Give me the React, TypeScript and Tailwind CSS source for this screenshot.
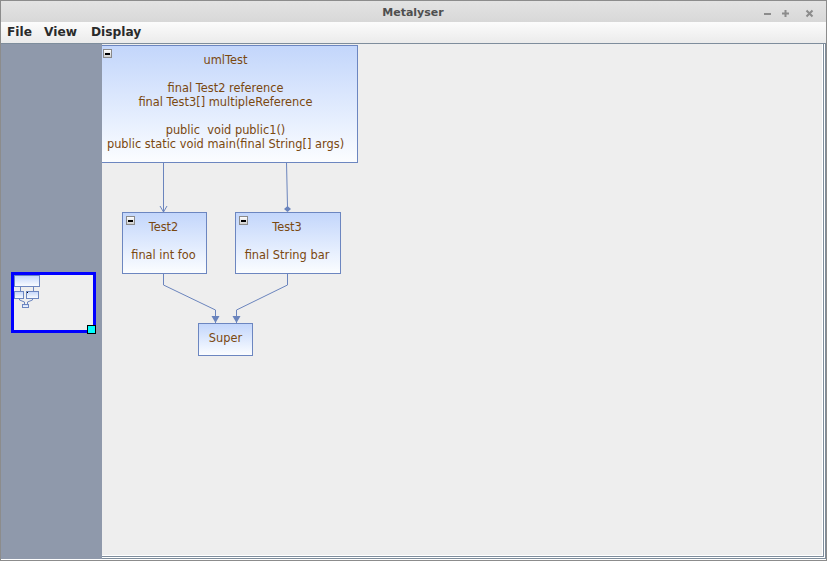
import React from "react";

const FONT = { fontFamily: '"DejaVu Sans", Verdana, sans-serif' };

function MinusIcon({ className }: { className: string }) {
  return (
    <div
      className={`absolute w-[9px] h-[9px] border border-[#8a8a8a] bg-gradient-to-b from-white to-[#cfcfcf] flex items-center justify-center ${className}`}
    >
      <div className="w-[5px] h-[2px] bg-black" />
    </div>
  );
}

function UmlBox({
  className,
  lines,
  icon = true,
}: {
  className: string;
  lines: string[];
  icon?: boolean;
}) {
  return (
    <div
      className={`absolute border border-[#6c86c0] bg-gradient-to-b from-[#c3d6fb] to-[#fbfdff] pt-[7px] flex flex-col items-center text-[11.4px] leading-[14px] text-[#7a4810] ${className}`}
      style={FONT}
    >
      {icon && <MinusIcon className="left-[3px] top-[3px]" />}
      {lines.map((l, i) => (
        <div key={i} className="h-[14px] whitespace-pre">
          {l}
        </div>
      ))}
    </div>
  );
}

export default function App() {
  return (
    <div
      className="w-[827px] h-[561px] flex flex-col border border-[#8c8c8c] bg-white overflow-hidden"
      style={FONT}
    >
      {/* Title bar */}
      <div className="relative h-[21px] shrink-0 bg-gradient-to-b from-[#e3e3e3] to-[#d8d8d8] flex items-center justify-center pt-[3px]">
        <span className="text-[11px] font-bold text-[#4f4f4f] ml-[-1px]">Metalyser</span>
        <svg className="absolute left-[762px] top-[8px]" width="60" height="10" viewBox="0 0 60 10">
          <rect x="1" y="4" width="7" height="2" fill="#8c8c8c" />
          <rect x="21.5" y="1" width="2" height="7" fill="#8c8c8c" />
          <rect x="19" y="3.5" width="7" height="2" fill="#8c8c8c" />
          <path d="M43.5 1.5 L49.5 7.5 M49.5 1.5 L43.5 7.5" stroke="#8c8c8c" strokeWidth="2" />
        </svg>
      </div>

      {/* Menu bar */}
      <div className="h-[21px] shrink-0 bg-gradient-to-b from-[#fcfcfc] to-[#ebebeb] flex items-center pl-[6px] text-[12.2px] font-bold text-[#2a2a2a]">
        <span className="w-[37px]">File</span>
        <span className="w-[47px]">View</span>
        <span>Display</span>
      </div>

      {/* Content */}
      <div className="flex-1 flex border-t border-[#7e8d9c] bg-white pb-px">
        {/* Left overview panel */}
        <div className="relative w-[101px] shrink-0 bg-[#8f99ab]">
          <div className="absolute left-[10px] top-[228px] w-[85px] h-[61px] border-[3px] border-[#0000ff] bg-[#eeeeee]">
            <svg className="absolute left-0 top-0" width="79" height="55" viewBox="0 0 79 55">
              <defs>
                <linearGradient id="mg" x1="0" y1="0" x2="0" y2="1">
                  <stop offset="0" stopColor="#c3d6fb" />
                  <stop offset="1" stopColor="#fbfdff" />
                </linearGradient>
              </defs>
              <path d="M6.5 11 V16 M19.5 11 V16 M5.5 23 V25 L10.5 27 V29 M18.5 23 V25 L13.5 27 V29" stroke="#6c86c0" fill="none" />
              <rect x="0.5" y="0.5" width="25" height="11" fill="url(#mg)" stroke="#6c86c0" />
              <rect x="0.5" y="16.5" width="9" height="7" fill="url(#mg)" stroke="#6c86c0" />
              <rect x="12.5" y="16.5" width="12" height="7" fill="url(#mg)" stroke="#6c86c0" />
              <rect x="8.5" y="29.5" width="6" height="3" fill="url(#mg)" stroke="#6c86c0" />
              <rect x="13" y="17" width="1" height="1" fill="#000" />
            </svg>
            <div className="absolute left-[73px] top-[50px] w-[9px] h-[9px] border border-black bg-[#00ffff]" />
          </div>
        </div>

        {/* Scroll pane borders */}
        <div className="flex-1 flex border-r border-b border-[#7e8d9c] pr-px pb-px bg-white">
          <div className="flex-1 flex border-r border-b border-[#7e8d9c] pr-px pb-px bg-white">
            {/* Canvas */}
            <div className="relative flex-1 bg-[#eeeeee] overflow-hidden">
              <svg className="absolute left-0 top-0" width="400" height="320" viewBox="0 0 400 320">
                <g stroke="#6a84bd" strokeWidth="1" fill="none">
                  <path d="M61.5 118 V168" />
                  <path d="M58 162 L61.5 168 L65 162" />
                  <path d="M184.5 118 L185.5 163" />
                  <path d="M61.5 229 V241 L113.5 266 V279" />
                  <path d="M185.5 229 V241 L134.5 266 V279" />
                </g>
                <path d="M185.5 162 L189 165 L185.5 168 L182 165 Z" fill="#6a84bd" />
                <path d="M109.5 272 L117.5 272 L113.5 279 Z" fill="#6a84bd" />
                <path d="M130.5 272 L138.5 272 L134.5 279 Z" fill="#6a84bd" />
              </svg>

              <UmlBox
                className="left-[-3px] top-[1px] w-[259px] h-[118px] pr-[6px]"
                lines={[
                  "umlTest",
                  "",
                  "final Test2 reference",
                  "final Test3[] multipleReference",
                  "",
                  "public  void public1()",
                  "public static void main(final String[] args)",
                ]}
              />
              <UmlBox
                className="left-[20px] top-[168px] w-[85px] h-[62px] pr-[2px]"
                lines={["Test2", "", "final int foo"]}
              />
              <UmlBox
                className="left-[133px] top-[168px] w-[106px] h-[62px] pr-[2px]"
                lines={["Test3", "", "final String bar"]}
              />
              <UmlBox
                className="left-[96px] top-[279px] w-[55px] h-[33px]"
                lines={["Super"]}
                icon={false}
              />
            </div>
          </div>
        </div>
      </div>
    </div>
  );
}
